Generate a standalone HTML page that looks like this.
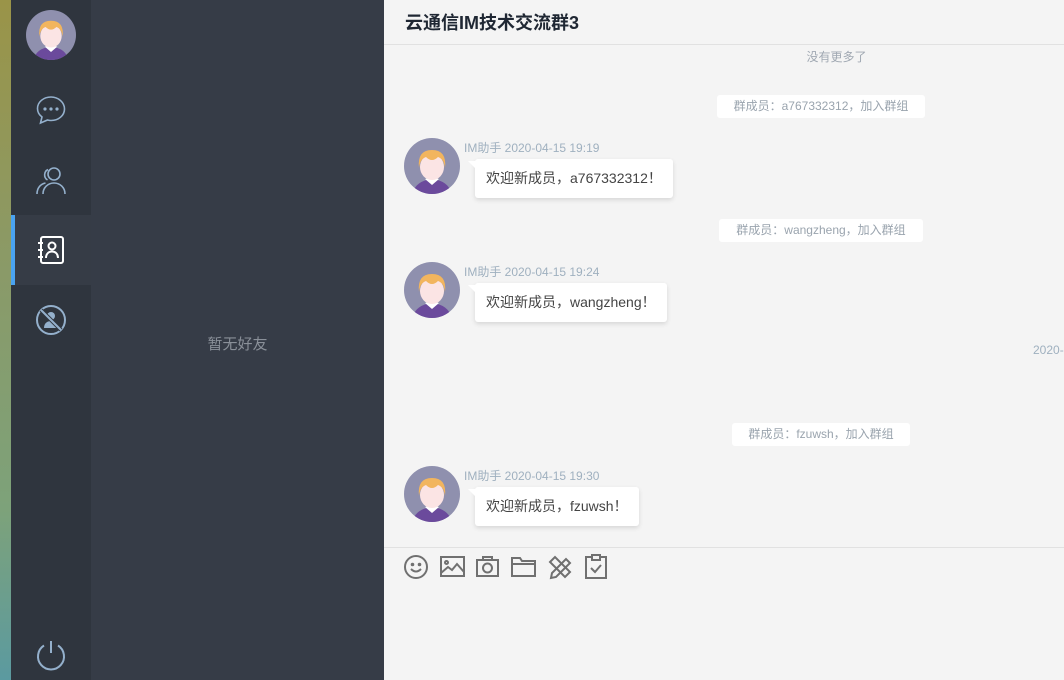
<!DOCTYPE html>
<html><head><meta charset="utf-8">
<style>
*{margin:0;padding:0;box-sizing:border-box}
body{width:1064px;height:680px;overflow:hidden;position:relative;font-family:"Liberation Sans","Noto Sans CJK SC",sans-serif;background:#f4f4f4}
.strip{position:absolute;left:0;top:0;width:11px;height:680px;background:linear-gradient(180deg,#9a9448 0%,#8a9a68 40%,#7da27a 75%,#5b9aa0 100%)}
.side{position:absolute;left:11px;top:0;width:80px;height:680px;background:#2f353e}
.sel{position:absolute;left:11px;top:215px;width:80px;height:70px;background:#363c46}
.selbar{position:absolute;left:11px;top:215px;width:4px;height:70px;background:#4aa3f0}
.panel{position:absolute;left:91px;top:0;width:293px;height:680px;background:#363c47}
.empty{position:absolute;left:91px;width:293px;top:333px;text-align:center;color:#8a9099;font-size:15px}
.ic{position:absolute}
.main{position:absolute;left:384px;top:0;width:680px;height:680px;background:#f4f4f4;overflow:hidden}
.hd{position:absolute;left:0;top:0;width:680px;height:45px;border-bottom:1px solid #e1e1e1}
.hd span{position:absolute;left:21px;top:9px;font-size:18px;font-weight:bold;color:#1f2733}
.nomore{position:absolute;left:0;width:905px;top:48px;text-align:center;color:#a0a8b2;font-size:12px}
.sys{position:absolute;background:#fff;color:#9aa4ae;font-size:12px;height:23px;line-height:23px;border-radius:3px;text-align:center;white-space:nowrap}
.av{position:absolute;left:20px;width:56px;height:56px}
.meta{position:absolute;left:80px;font-size:12px;color:#9fb0bf;white-space:nowrap}
.bub{position:absolute;left:91px;background:#fff;height:39px;line-height:39px;padding:0 11px;font-size:14px;color:#444;border-radius:3px;box-shadow:0 2px 5px rgba(0,0,0,.12);white-space:nowrap}
.bub:before{content:"";position:absolute;left:-7px;top:2px;border-style:solid;border-width:0 8px 8px 0;border-color:transparent #fff transparent transparent}
.ft{position:absolute;left:0;top:547px;width:680px;height:1px;background:#e1e1e1}
</style></head><body>
<svg width="0" height="0" style="position:absolute"><defs>
<symbol id="av" viewBox="0 0 56 56">
<clipPath id="cc"><circle cx="28" cy="28" r="28"/></clipPath>
<g clip-path="url(#cc)">
<rect width="56" height="56" fill="#8f90ae"/>
<path d="M8 58 Q10 43 28 41 Q46 43 48 58Z" fill="#6b4a9c"/>
<path d="M21 41 L28 47 L35 41 L28 39Z" fill="#fff"/>
<ellipse cx="28" cy="29" rx="12" ry="13" fill="#fbe4e4"/>
<path d="M15 30 Q13 12 28 12 Q43 12 41 30 Q40 21 34 19 Q28 25 22 19 Q16 21 15 30Z" fill="#f2b55e"/>
</g></symbol>
</defs></svg>
<div class="strip"></div>
<div class="side"></div>
<div class="panel"></div>
<div class="sel"></div><div class="selbar"></div>
<svg class="ic" style="left:26px;top:10px" width="50" height="50"><use href="#av"/></svg>
<svg class="ic" style="left:35px;top:94px" width="32" height="32" viewBox="0 0 32 32" fill="none" stroke="#94b0cc" stroke-width="1.6"><path d="M16 3C8.5 3 2.5 8 2.5 14.5c0 3.4 1.7 6.4 4.5 8.5L5.5 29l7-3c1.1.3 2.3.5 3.5.5 7.5 0 13.5-5 13.5-11.5S23.5 3 16 3z"/><circle cx="10" cy="15" r=".8" fill="#94b0cc"/><circle cx="16" cy="15" r=".8" fill="#94b0cc"/><circle cx="22" cy="15" r=".8" fill="#94b0cc"/></svg>
<svg class="ic" style="left:35px;top:164px" width="32" height="32" viewBox="0 0 32 32" fill="none" stroke="#94b0cc" stroke-width="1.6"><circle cx="19" cy="10" r="6"/><path d="M8 30c0-6.5 5-11 11-11s11 4.5 11 11"/><path d="M13 5.5A6 6 0 0 0 12.5 16"/><path d="M2 30c0-6 3.5-10 8.5-11"/></svg>
<svg class="ic" style="left:37px;top:235px" width="30" height="30" viewBox="0 0 30 30" fill="none" stroke="#fff" stroke-width="2"><rect x="4" y="2" width="22" height="26" rx="2"/><path d="M1 8h5M1 15h5M1 22h5"/><circle cx="15" cy="11" r="3.5"/><path d="M9 23c0-4 2.5-6.5 6-6.5s6 2.5 6 6.5"/></svg>
<svg class="ic" style="left:35px;top:304px" width="32" height="32" viewBox="0 0 32 32" fill="none" stroke="#94b0cc" stroke-width="2"><circle cx="16" cy="16" r="14"/><circle cx="16" cy="12" r="4" fill="#94b0cc" stroke="none"/><path d="M9 24c0-4.5 3-7 7-7s7 2.5 7 7z" fill="#94b0cc" stroke="none"/><path d="M6 6l20 20" stroke="#2f353e" stroke-width="4"/><path d="M6 6l20 20"/></svg>
<svg class="ic" style="left:35px;top:639px" width="32" height="32" viewBox="0 0 32 32" fill="none" stroke="#94b0cc" stroke-width="2"><path d="M16 2v12"/><path d="M9 6.5A13 13 0 1 0 23 6.5"/></svg>
<div class="empty">暂无好友</div>
<div class="main">
<div class="hd"><span>云通信IM技术交流群3</span></div>
<div class="nomore">没有更多了</div>
<div class="sys" style="left:333px;top:95px;width:208px">群成员：a767332312，加入群组</div>
<svg class="av" style="top:138px"><use href="#av"/></svg>
<div class="meta" style="top:139px">IM助手 2020-04-15 19:19</div>
<div class="bub" style="top:159px">欢迎新成员，a767332312！</div>
<div class="sys" style="left:335px;top:219px;width:204px">群成员：wangzheng，加入群组</div>
<svg class="av" style="top:262px"><use href="#av"/></svg>
<div class="meta" style="top:263px">IM助手 2020-04-15 19:24</div>
<div class="bub" style="top:283px">欢迎新成员，wangzheng！</div>
<div class="meta" style="left:649px;top:343px">2020-04-15 19:25</div>
<div class="sys" style="left:348px;top:423px;width:178px">群成员：fzuwsh，加入群组</div>
<svg class="av" style="top:466px"><use href="#av"/></svg>
<div class="meta" style="top:467px">IM助手 2020-04-15 19:30</div>
<div class="bub" style="top:487px">欢迎新成员，fzuwsh！</div>
<div class="ft"></div>
<svg class="ic" style="left:20px;top:555px" width="26" height="24" viewBox="0 0 26 24" fill="none" stroke="#707070" stroke-width="2"><circle cx="12" cy="12" r="11"/><circle cx="8.5" cy="9.5" r=".8" fill="#707070"/><circle cx="15.5" cy="9.5" r=".8" fill="#707070"/><path d="M7 14q5 5 10 0"/></svg>
<svg class="ic" style="left:56px;top:556px" width="26" height="22" viewBox="0 0 26 22" fill="none" stroke="#707070" stroke-width="2"><rect x="1" y="1" width="23" height="19"/><circle cx="6.5" cy="6.5" r="1.5"/><path d="M1 17l7-6 4 3 5-6 7 8"/></svg>
<svg class="ic" style="left:92px;top:556px" width="24" height="22" viewBox="0 0 24 22" fill="none" stroke="#707070" stroke-width="2"><rect x="1" y="4" width="21" height="16"/><path d="M7 4V1h9v3"/><circle cx="11.5" cy="12" r="4.5"/></svg>
<svg class="ic" style="left:127px;top:556px" width="26" height="22" viewBox="0 0 26 22" fill="none" stroke="#707070" stroke-width="2"><path d="M1 2h8l2 3h13v15H1z"/><path d="M1 8h23"/></svg>
<svg class="ic" style="left:163px;top:554px" width="26" height="26" viewBox="0 0 26 26" fill="none" stroke="#707070" stroke-width="2"><path d="M4 24l1-5L19 5l4 4L9 23z"/><path d="M3 8l5-5 15 15-5 5z"/></svg>
<svg class="ic" style="left:200px;top:553px" width="24" height="26" viewBox="0 0 24 26" fill="none" stroke="#707070" stroke-width="2"><path d="M7 4H2v21h20V4h-5"/><path d="M8 2h8v5H8z"/><path d="M7 15l4 4 6-7"/></svg>
</div>
</body></html>
